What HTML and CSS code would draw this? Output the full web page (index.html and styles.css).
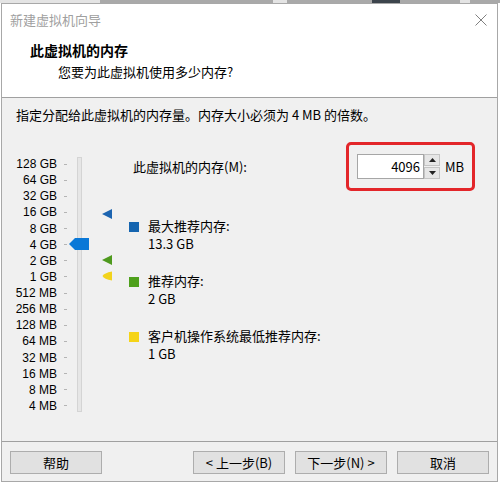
FILE: index.html
```html
<!DOCTYPE html>
<html lang="zh-CN">
<head>
    <meta charset="UTF-8">
    <title>新建虚拟机向导</title>
    <link rel="stylesheet" href="styles.css">
</head>
<body>
<div class="top-strip">
    <span class="seg light" style="width:100px"></span>
    <span class="seg mid" style="width:173px"></span>
    <span class="seg light" style="width:14px"></span>
    <span class="seg mid" style="width:85px"></span>
    <span class="seg dark" style="width:28px"></span>
    <span class="seg mid" style="width:60px"></span>
    <span class="seg light" style="width:10px"></span>
    <span class="seg mid" style="width:30px"></span>
</div>
<div class="window">
    <div class="titlebar">
        <span class="title">新建虚拟机向导</span>
        <svg class="close" width="12" height="12" viewBox="0 0 12 12">
            <path d="M0.5 0.5 L11.5 11.5 M11.5 0.5 L0.5 11.5" stroke="#808080" stroke-width="1" fill="none"/>
        </svg>
    </div>
    <div class="header">
        <div class="header-title">此虚拟机的内存</div>
        <div class="header-sub">您要为此虚拟机使用多少内存?</div>
    </div>
    <div class="wizard-body">
        <p class="intro">指定分配给此虚拟机的内存量。内存大小必须为 4 MB 的倍数。</p>
        <div class="content">
            <div class="scale">
                <div class="scale-row"><span class="scale-label">128 GB</span><i class="tick"></i></div>
                <div class="scale-row"><span class="scale-label">64 GB</span><i class="tick"></i></div>
                <div class="scale-row"><span class="scale-label">32 GB</span><i class="tick"></i></div>
                <div class="scale-row"><span class="scale-label">16 GB</span><i class="tick"></i></div>
                <div class="scale-row"><span class="scale-label">8 GB</span><i class="tick"></i></div>
                <div class="scale-row"><span class="scale-label">4 GB</span><i class="tick"></i></div>
                <div class="scale-row"><span class="scale-label">2 GB</span><i class="tick"></i></div>
                <div class="scale-row"><span class="scale-label">1 GB</span><i class="tick"></i></div>
                <div class="scale-row"><span class="scale-label">512 MB</span><i class="tick"></i></div>
                <div class="scale-row"><span class="scale-label">256 MB</span><i class="tick"></i></div>
                <div class="scale-row"><span class="scale-label">128 MB</span><i class="tick"></i></div>
                <div class="scale-row"><span class="scale-label">64 MB</span><i class="tick"></i></div>
                <div class="scale-row"><span class="scale-label">32 MB</span><i class="tick"></i></div>
                <div class="scale-row"><span class="scale-label">16 MB</span><i class="tick"></i></div>
                <div class="scale-row"><span class="scale-label">8 MB</span><i class="tick"></i></div>
                <div class="scale-row"><span class="scale-label">4 MB</span><i class="tick"></i></div>

                <div class="track"></div>
                <svg class="thumb" width="20" height="12" viewBox="0 0 20 12">
                    <path d="M0 6 L6 0 L20 0 L20 12 L6 12 Z" fill="#0a78d7"/>
                </svg>
                <svg class="marker marker-max" width="10" height="10" viewBox="0 0 10 10">
                    <path d="M0 5 L10 0 L10 10 Z" fill="#1c64b0"/>
                </svg>
                <svg class="marker marker-rec" width="10" height="10" viewBox="0 0 10 10">
                    <path d="M0 5 L10 0 L10 10 Z" fill="#4f9a1e"/>
                </svg>
                <svg class="marker marker-min" width="10" height="10" viewBox="0 0 10 10">
                    <path d="M0.5 5 Q2 2 10 0.5 L10 9.5 Q2 8 0.5 5 Z" fill="#f2d31c"/>
                </svg>
            </div>

            <div class="panel">
                <div class="mem-row">
                    <label class="mem-label" for="memory">此虚拟机的内存(M):</label>
                    <div class="mem-box">
                        <input class="mem-input" id="memory" type="text" value="4096">
                        <div class="spinner">
                            <span class="spin-btn">
                                <svg width="7" height="4" viewBox="0 0 7 4"><path d="M0 4 L3.5 0 L7 4 Z" fill="#222"/></svg>
                            </span>
                            <span class="spin-btn">
                                <svg width="7" height="4" viewBox="0 0 7 4"><path d="M0 0 L3.5 4 L7 0 Z" fill="#222"/></svg>
                            </span>
                        </div>
                        <span class="mem-unit">MB</span>
                    </div>
                </div>

                <div class="legend">
                    <i class="swatch swatch-max"></i>
                    <div>
                        <div>最大推荐内存:</div>
                        <div>13.3 GB</div>
                    </div>
                </div>
                <div class="legend">
                    <i class="swatch swatch-rec"></i>
                    <div>
                        <div>推荐内存:</div>
                        <div>2 GB</div>
                    </div>
                </div>
                <div class="legend">
                    <i class="swatch swatch-min"></i>
                    <div>
                        <div>客户机操作系统最低推荐内存:</div>
                        <div>1 GB</div>
                    </div>
                </div>
            </div>
        </div>
    </div>
    <div class="footer">
        <button class="btn">帮助</button>
        <div class="nav-buttons">
            <button class="btn">&lt; 上一步(B)</button>
            <button class="btn">下一步(N) &gt;</button>
            <button class="btn">取消</button>
        </div>
    </div>
</div>
</body>
</html>
```

FILE: styles.css
```css
html {
    background-color: #ffffff;
}
body {
    margin: 0;
    padding: 0;
    font-family: "Noto Sans CJK SC", "Noto Sans", sans-serif;
    font-size: 13px;
    color: #000;
}
.top-strip {
    display: flex;
    height: 3px;
}
.seg {
    display: block;
    height: 3px;
}
.seg.light { background-color: #e4e4e4; }
.seg.mid { background-color: #a9a9a9; }
.seg.dark { background-color: #3c444c; }

.window {
    margin-left: 1px;
    width: 495px;
    height: 477px;
    border: 1px solid #a8a8a8;
    background-color: #f0f0f0;
    display: flex;
    flex-direction: column;
}
.titlebar {
    height: 31px;
    background-color: #fff;
    display: flex;
    align-items: center;
    justify-content: space-between;
    padding: 0 10px 0 8px;
}
.title {
    color: #a0a0a0;
    font-size: 13px;
    line-height: 31px;
}
.header {
    height: 62px;
    box-sizing: border-box;
    background-color: #fff;
    padding-top: 6px;
}
.header-title {
    font-size: 14px;
    font-weight: bold;
    line-height: 18px;
    padding-left: 28px;
}
.header-sub {
    font-size: 13px;
    line-height: 18px;
    margin-top: 4px;
    padding-left: 56px;
}
.wizard-body {
    border-top: 1px solid #a0a0a0;
    height: 343px;
}
.intro {
    margin: 8px 0 0 14px;
    line-height: 18px;
}
.content {
    display: flex;
    margin-top: 16px;
}
.scale {
    position: relative;
    width: 127px;
    padding-top: 16px;
}
.scale-row {
    display: flex;
    align-items: center;
    height: 16.13px;
}
.scale-label {
    width: 55px;
    text-align: right;
    font-family: "Liberation Sans", Arial, sans-serif;
    font-size: 12px;
    line-height: 14px;
    white-space: nowrap;
}
.tick {
    display: block;
    width: 3px;
    height: 1px;
    margin-left: 7px;
    background-color: #b4b4b4;
}
.track {
    position: absolute;
    left: 75px;
    top: 17px;
    width: 3px;
    height: 253px;
    border: 1px solid #d4d4d4;
    background-color: #e6e6e6;
}
.thumb {
    position: absolute;
    left: 67px;
    top: 98px;
}
.marker {
    position: absolute;
    left: 100px;
}
.marker-max { top: 69px; }
.marker-rec { top: 115px; }
.marker-min { top: 131px; }

.panel {
    flex: 1;
}
.mem-row {
    display: flex;
    align-items: center;
    padding-left: 4px;
    margin-top: 2px;
}
.mem-label {
    flex: 0 0 213px;
}
.mem-box {
    width: 129px;
    height: 49px;
    box-sizing: border-box;
    border: 3px solid #e3262a;
    border-radius: 5px;
    display: flex;
    align-items: center;
    padding-left: 8px;
}
.mem-input {
    width: 67px;
    height: 25px;
    box-sizing: border-box;
    border: 1px solid #a6a6a6;
    background-color: #fff;
    font-family: inherit;
    font-size: 13px;
    text-align: right;
    padding: 0 3px 0 0;
    margin: 0;
}
.spinner {
    display: flex;
    flex-direction: column;
    width: 16px;
    height: 25px;
    gap: 1px;
}
.spin-btn {
    flex: 1;
    display: flex;
    align-items: center;
    justify-content: center;
    background-color: #e6e6e6;
    border: 1px solid #c4c4c4;
}
.mem-unit {
    margin-left: 5px;
}
.legend {
    display: flex;
    gap: 9px;
    line-height: 17.5px;
}
.mem-row + .legend {
    margin-top: 26px;
}
.legend + .legend {
    margin-top: 20px;
}
.swatch {
    display: block;
    width: 10px;
    height: 10px;
    margin-top: 5px;
}
.swatch-max { background-color: #1565b0; }
.swatch-rec { background-color: #4ea01c; }
.swatch-min { background-color: #f5d418; }

.footer {
    border-top: 1px solid #a0a0a0;
    display: flex;
    justify-content: space-between;
    padding: 9px 8px 0 8px;
}
.nav-buttons {
    display: flex;
    gap: 10px;
}
.btn {
    width: 92px;
    height: 23px;
    margin: 0;
    padding: 0;
    border: 1px solid #adadad;
    background-color: #e1e1e1;
    font-family: inherit;
    font-size: 13px;
    color: #000;
}
```
